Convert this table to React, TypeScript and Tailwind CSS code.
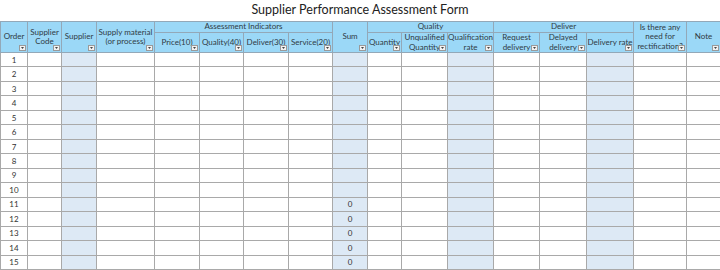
import React from "react";

type Col = { w: number; shaded?: boolean };

const cols: Col[] = [
  { w: 27 },
  { w: 34 },
  { w: 35, shaded: true },
  { w: 58 },
  { w: 45 },
  { w: 44 },
  { w: 45 },
  { w: 44 },
  { w: 35, shaded: true },
  { w: 34 },
  { w: 46 },
  { w: 46, shaded: true },
  { w: 46 },
  { w: 47 },
  { w: 47, shaded: true },
  { w: 53 },
  { w: 34 },
];

const rows = Array.from({ length: 15 }, (_, i) => i + 1);

const FilterButton: React.FC = () => (
  <span className="absolute right-[1px] bottom-[1px] flex h-[6px] w-[7px] items-center justify-center border border-[#9a9a9a] bg-[#f2f2f2]">
    <svg width="3" height="2" viewBox="0 0 3 2">
      <path d="M0 0 L3 0 L1.5 2 Z" fill="#444" />
    </svg>
  </span>
);

const Head: React.FC<{
  children: React.ReactNode;
  rowSpan?: number;
  colSpan?: number;
  filter?: boolean;
}> = ({ children, rowSpan, colSpan, filter = true }) => (
  <th
    rowSpan={rowSpan}
    colSpan={colSpan}
    className="relative border border-[#93a8b8] bg-[#9bd8f7] p-0 text-center align-middle text-[8px] leading-[9.5px] font-normal text-[#2f3a44]"
  >
    {children}
    {filter && <FilterButton />}
  </th>
);

export default function App() {
  return (
    <div className="h-[270px] w-[720px] overflow-hidden bg-white font-['Lato',sans-serif]">
      <div className="flex h-[21px] items-center justify-center text-[12.5px] text-[#222]">
        Supplier Performance Assessment Form
      </div>
      <table className="w-[720px] table-fixed border-collapse">
        <colgroup>
          {cols.map((c, i) => (
            <col key={i} style={{ width: c.w }} />
          ))}
        </colgroup>
        <thead>
          <tr className="h-[11px]">
            <Head rowSpan={2}>Order</Head>
            <Head rowSpan={2}>
              Supplier
              <br />
              Code
            </Head>
            <Head rowSpan={2}>Supplier</Head>
            <Head rowSpan={2}>
              Supply material
              <br />
              (or process)
            </Head>
            <Head colSpan={4} filter={false}>
              Assessment Indicators
            </Head>
            <Head rowSpan={2}>Sum</Head>
            <Head colSpan={3} filter={false}>
              Quality
            </Head>
            <Head colSpan={3} filter={false}>
              Deliver
            </Head>
            <Head rowSpan={2}>
              Is there any
              <br />
              need for
              <br />
              rectification?
            </Head>
            <Head rowSpan={2}>Note</Head>
          </tr>
          <tr className="h-[20px]">
            <Head>Price(10)</Head>
            <Head>Quality(40)</Head>
            <Head>Deliver(30)</Head>
            <Head>Service(20)</Head>
            <Head>Quantity</Head>
            <Head>
              Unqualified
              <br />
              Quantity
            </Head>
            <Head>
              Qualification
              <br />
              rate
            </Head>
            <Head>
              Request
              <br />
              delivery
            </Head>
            <Head>
              Delayed
              <br />
              delivery
            </Head>
            <Head>Delivery rate</Head>
          </tr>
        </thead>
        <tbody>
          {rows.map((n) => (
            <tr key={n} className="h-[14.47px]">
              {cols.map((c, i) => (
                <td
                  key={i}
                  className={`border border-[#a9a9a9] p-0 text-center align-middle text-[8px] leading-none text-[#333] ${
                    c.shaded ? "bg-[#dde9f5]" : "bg-white"
                  }`}
                >
                  {i === 0 ? n : i === 8 && n > 10 ? "0" : ""}
                </td>
              ))}
            </tr>
          ))}
        </tbody>
      </table>
    </div>
  );
}
